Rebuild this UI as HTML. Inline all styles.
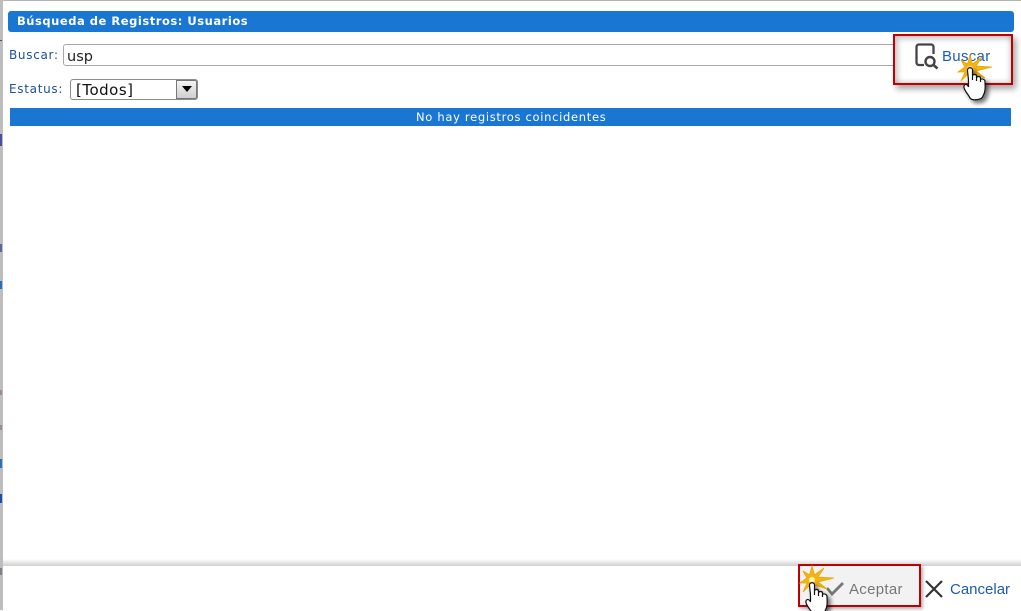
<!DOCTYPE html>
<html><head><meta charset="utf-8"><style>
html,body{margin:0;padding:0}
body{width:1021px;height:610px;overflow:hidden;background:#fff;position:relative;font-family:"DejaVu Sans","Liberation Sans",sans-serif}
.a{position:absolute;white-space:nowrap}
svg{position:absolute;overflow:visible}
</style></head><body>
<div class="a" style="left:0;top:0;width:1021px;height:1px;background:#b4b4b4"></div>
<div class="a" style="left:0;top:0;width:3px;height:610px;background:#bdbdbd"></div>
<div class="a" style="left:0;top:40px;width:2px;height:1px;background:#456"></div>
<div class="a" style="left:0;top:134px;width:2px;height:12px;background:#46509a"></div>
<div class="a" style="left:0;top:244px;width:2px;height:8px;background:#5a64a0"></div>
<div class="a" style="left:0;top:281px;width:2px;height:8px;background:#2a70b8"></div>
<div class="a" style="left:0;top:390px;width:2px;height:5px;background:#a08898"></div>
<div class="a" style="left:0;top:425px;width:2px;height:5px;background:#a08898"></div>
<div class="a" style="left:0;top:459px;width:2px;height:9px;background:#2a70b8"></div>
<div class="a" style="left:0;top:494px;width:2px;height:9px;background:#1a50a8"></div>
<div class="a" style="left:0;top:568px;width:2px;height:7px;background:#80808a"></div>

<div class="a" style="left:8px;top:11px;width:1006px;height:21px;background:#1976d2;border-radius:3px"></div>
<div class="a" style="left:17px;top:14px;font-size:11.5px;line-height:15px;font-weight:bold;color:#fff;letter-spacing:.53px">Búsqueda de Registros: Usuarios</div>

<div class="a" style="left:9px;top:48px;font-size:12px;line-height:14px;color:#1c4f9c;letter-spacing:.7px">Buscar:</div>
<div class="a" style="left:63px;top:44px;width:840px;height:20px;border:1px solid #a9a9a9;border-radius:3px 0 0 3px;background:#fff"></div>
<div class="a" style="left:67px;top:49px;font-size:14.5px;line-height:17px;color:#222">usp</div>

<div class="a" style="left:9px;top:82px;font-size:12px;line-height:14px;color:#1c4f9c;letter-spacing:.7px">Estatus:</div>
<div class="a" style="left:70px;top:79px;width:126px;height:19px;border:1px solid #8c8c8c;border-radius:3px;background:#fff"></div>
<div class="a" style="left:76px;top:81px;font-size:15px;line-height:18px;color:#111;letter-spacing:.5px">[Todos]</div>
<div class="a" style="left:176px;top:80px;width:21px;height:19px;background:linear-gradient(#f4f4f4,#cfcfcf);border:1px solid #777;border-radius:0 2px 2px 0;box-sizing:border-box"></div>
<svg style="left:0;top:0" width="1" height="1"><polygon points="182,86 192,86 187,92" fill="#000"/></svg>

<div class="a" style="left:10px;top:108px;width:1001px;height:18px;background:#1976d2"></div>
<div class="a" style="left:416px;top:110px;font-size:11.5px;line-height:14px;color:#fff;letter-spacing:.69px">No hay registros coincidentes</div>

<!-- Buscar button -->
<div class="a" style="left:893px;top:34px;width:120px;height:51px;box-sizing:border-box;border:2px solid #c00000;background:#fff;box-shadow:3px 4px 6px rgba(0,0,0,.35), inset 3px 3px 6px rgba(0,0,0,.22), inset -2px -2px 5px rgba(0,0,0,.14)"></div>
<svg style="left:0;top:0" width="1" height="1">
<path d="M924 65H919a2.500 2.500 0 0 1-2.500-2.500V47a2.500 2.500 0 0 1 2.500-2.500H931a2.500 2.500 0 0 1 2.500 2.500V54" fill="none" stroke="#444" stroke-width="2.300"/>
<circle cx="930" cy="61.500" r="4.500" fill="none" stroke="#444" stroke-width="2.400"/>
<path d="M933.500 65L937.500 68.500" stroke="#444" stroke-width="2.600"/>
</svg>
<div class="a" style="left:942px;top:48px;font-size:15px;line-height:18px;color:#1c5cb0;font-family:'Liberation Sans',sans-serif;letter-spacing:.3px">Buscar</div>
<svg style="left:958px;top:54px" width="36" height="50" viewBox="0 0 36 50">
<polygon points="12,1 14.500,10 24,3 18,12 34,13 18,17 27,24 15,20 13,30 10,20 3,27 7,18 0,18 7,13 3,6 9.500,10" fill="#f2b418" stroke="#e6a800" stroke-width=".8"/>
<circle cx="12" cy="15" r="3" fill="#fff0b0"/>
<path d="M10.500 28C10.500 23 9.500 19 9.500 16C9.500 13 14.500 13 14.500 16V26V22C14.500 20 18.500 20 18.500 22V27V24C18.500 22 22.500 22 22.500 24V28V26C22.500 24 27 25 27 27.500C27 32 28 37 25 42C24 46 14 47 12 44C10 40 5 35 6 32C7 29 10 31 10.500 33Z" fill="#fff" stroke="#111" stroke-width="1.200" style="filter:drop-shadow(3px 3px 2px rgba(0,0,0,.55))"/>
</svg>

<!-- footer -->
<div class="a" style="left:3px;top:559px;width:1018px;height:7px;background:linear-gradient(rgba(200,200,200,0),#cfcfcf)"></div>
<div class="a" style="left:798px;top:564px;width:123px;height:43px;box-sizing:border-box;border:2px solid #c00000;background:#f2f2f2;box-shadow:2px 2px 3px rgba(0,0,0,.3)"></div>
<svg style="left:0;top:0" width="1" height="1">
<path d="M827 588L832 594L843 583" fill="none" stroke="#777" stroke-width="2.800"/>
<path d="M926 581L942 597M942 581L926 597" stroke="#333" stroke-width="2.200"/>
</svg>
<div class="a" style="left:849px;top:581px;font-size:15px;line-height:18px;color:#777;font-family:'Liberation Sans',sans-serif;letter-spacing:.3px">Aceptar</div>
<div class="a" style="left:950px;top:581px;font-size:15px;line-height:18px;color:#1c5cb0;font-family:'Liberation Sans',sans-serif">Cancelar</div>
<svg style="left:800px;top:565px" width="36" height="46" viewBox="0 0 36 46">
<polygon points="12,1 14.500,10 24,3 18,12 34,13 18,17 27,24 15,20 13,30 10,20 3,27 7,18 0,18 7,13 3,6 9.500,10" fill="#f2b418" stroke="#e6a800" stroke-width=".8"/>
<circle cx="12" cy="15" r="3" fill="#fff0b0"/>
<path d="M10.500 28C10.500 23 9.500 19 9.500 16C9.500 13 14.500 13 14.500 16V26V22C14.500 20 18.500 20 18.500 22V27V24C18.500 22 22.500 22 22.500 24V28V26C22.500 24 27 25 27 27.500C27 32 28 37 25 42C24 46 14 47 12 44C10 40 5 35 6 32C7 29 10 31 10.500 33Z" fill="#fff" stroke="#111" stroke-width="1.200" transform="translate(0,4)" style="filter:drop-shadow(3px 3px 2px rgba(0,0,0,.55))"/>
</svg>
</body></html>
